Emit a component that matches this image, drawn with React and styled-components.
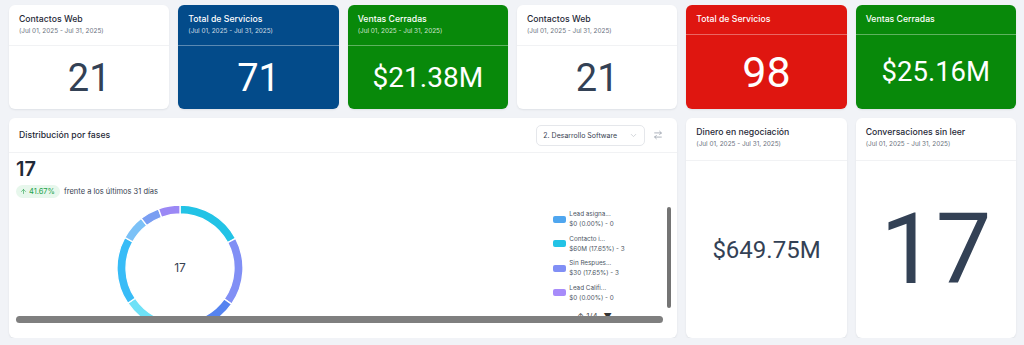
import React from 'react'
import styled, { createGlobalStyle } from 'styled-components'
import { ChevronDown, ArrowRightLeft, ArrowUp } from 'lucide-react'

const GlobalStyle = createGlobalStyle`
  *{ box-sizing: border-box; margin: 0; padding: 0; }
  body{
    background: #f1f3f7;
    font-family: Inter, "Noto Sans", sans-serif;
    color: #1f2937;
  }
`

const tones = {
  white: { bg: '#ffffff', title: '#1f2937', date: '#6b7280', line: '#f1f2f4', value: '#334155' },
  blue: { bg: '#034b8a', title: '#ffffff', date: 'rgba(255,255,255,0.8)', line: 'rgba(255,255,255,0.35)', value: '#ffffff' },
  green: { bg: '#08890a', title: '#ffffff', date: 'rgba(255,255,255,0.8)', line: 'rgba(255,255,255,0.35)', value: '#ffffff' },
  red: { bg: '#df1610', title: '#ffffff', date: 'rgba(255,255,255,0.8)', line: 'rgba(255,255,255,0.35)', value: '#ffffff' },
}

const Page = styled.div`
  display: grid;
  grid-template-columns: repeat(6, 1fr);
  grid-template-rows: 104px 220px;
  gap: 9px;
  padding: 5px 8px 0 9px;
  width: 1024px;
`

const Card = styled.div`
  background: ${p => tones[p.$tone || 'white'].bg};
  border-radius: 6px;
  box-shadow: 0 1px 2px rgba(15, 23, 42, 0.08);
  display: flex;
  flex-direction: column;
  overflow: hidden;
  grid-column: span ${p => p.$span || 1};
`

const Head = styled.div`
  padding: ${p => p.$pad || '8px 10px 9px'};
  border-bottom: 1px solid ${p => tones[p.$tone || 'white'].line};
`

const Title = styled.div`
  font-size: 8.7px;
  line-height: 13px;
  font-weight: 500;
  white-space: nowrap;
  color: ${p => tones[p.$tone || 'white'].title};
`

const DateRange = styled.div`
  font-size: 6.4px;
  line-height: 10px;
  white-space: nowrap;
  color: ${p => tones[p.$tone || 'white'].date};
`

const Value = styled.div`
  flex: 1;
  display: flex;
  align-items: center;
  justify-content: center;
  font-family: Roboto, "Liberation Sans", sans-serif;
  font-size: ${p => p.$size}px;
  line-height: 1;
  color: ${p => tones[p.$tone || 'white'].value};
`

const StatCard = ({ tone, title, dated = true, value, size, pad }) => (
  <Card $tone={tone}>
    <Head $tone={tone} $pad={pad || (dated ? '8px 10px 9px' : '8px 10px 8px')}>
      <Title $tone={tone}>{title}</Title>
      {dated && <DateRange $tone={tone}>(Jul 01, 2025 - Jul 31, 2025)</DateRange>}
    </Head>
    <Value $tone={tone} $size={size}>{value}</Value>
  </Card>
)

/* distribution card */

const BigHead = styled.div`
  height: 35px;
  padding: 0 14px 0 10px;
  display: flex;
  align-items: center;
  justify-content: space-between;
  border-bottom: 1px solid #f1f2f4;
`

const Controls = styled.div`
  display: flex;
  align-items: center;
  gap: 8px;
  color: #9ca3af;
`

const Select = styled.div`
  width: 109px;
  height: 21px;
  border: 1px solid #e5e7eb;
  border-radius: 5px;
  display: flex;
  align-items: center;
  justify-content: space-between;
  padding: 0 6px;
  font-size: 7px;
  white-space: nowrap;
  color: #374151;
  svg{ color: #c4c8cf; }
`

const Body = styled.div`
  padding: 6px 5px 0 7px;
  display: flex;
  flex-direction: column;
`

const Total = styled.div`
  font-size: 20px;
  line-height: 20px;
  font-weight: 600;
  color: #1f2937;
`

const TrendRow = styled.div`
  margin-top: 6px;
  display: flex;
  align-items: center;
  gap: 4px;
  font-size: 7.5px;
  color: #374151;
`

const Badge = styled.span`
  display: inline-flex;
  align-items: center;
  gap: 2px;
  height: 13px;
  padding: 0 5px 0 4px;
  border-radius: 7px;
  background: #e7f7ec;
  color: #22a24a;
`

const ChartArea = styled.div`
  margin-top: 5px;
  height: 113px;
  display: flex;
  overflow: hidden;
`

const Donut = styled.svg`
  margin-left: 99px;
  flex: none;
`

const Legend = styled.div`
  margin-left: auto;
  width: 111px;
  padding-top: 6px;
  display: flex;
  flex-direction: column;
  gap: 4.5px;
`

const LegendItem = styled.div`
  display: flex;
  align-items: center;
  gap: 3px;
  font-size: 6.3px;
  line-height: 10px;
  color: #4b5563;
`

const Swatch = styled.span`
  width: 13px;
  height: 7px;
  border-radius: 2px;
  background: ${p => p.$color};
  flex: none;
`

const Pager = styled.div`
  margin-top: 4px;
  padding-left: 24px;
  font-size: 8px;
  line-height: 10px;
  color: #555;
  b{ color: #333; margin-left: 6px; }
`

const VScroll = styled.div`
  width: 4px;
  margin: 4px 1px 0 3px;
  height: 101px;
  border-radius: 2px;
  background: #747474;
  flex: none;
`

const HScroll = styled.div`
  height: 7px;
  margin-right: 9px;
  border-radius: 4px;
  background: #7f7f7f;
`

const segments = [
  { s: 0, e: 62, c: '#22c3e6' },
  { s: 62, e: 125, c: '#818ff5' },
  { s: 125, e: 188, c: '#5583f0' },
  { s: 188, e: 236, c: '#6ee1f7' },
  { s: 236, e: 299, c: '#38bcf7' },
  { s: 299, e: 322, c: '#7cc1f7' },
  { s: 322, e: 340, c: '#7a9ef2' },
  { s: 340, e: 360, c: '#9b88f5' },
]

const pt = (cx, cy, r, a) => {
  const rad = (a - 90) * Math.PI / 180
  return [cx + r * Math.cos(rad), cy + r * Math.sin(rad)]
}

const arc = (cx, cy, r1, r2, s, e) => {
  const large = e - s > 180 ? 1 : 0
  const [x1, y1] = pt(cx, cy, r2, s)
  const [x2, y2] = pt(cx, cy, r2, e)
  const [x3, y3] = pt(cx, cy, r1, e)
  const [x4, y4] = pt(cx, cy, r1, s)
  return `M${x1} ${y1} A${r2} ${r2} 0 ${large} 1 ${x2} ${y2} L${x3} ${y3} A${r1} ${r1} 0 ${large} 0 ${x4} ${y4} Z`
}

const legend = [
  { c: '#4fa6ef', name: 'Lead asigna...', v: '$0 (0.00%) - 0' },
  { c: '#22c3e6', name: ' Contacto i...', v: '$60M (17.65%) - 3' },
  { c: '#818ff5', name: 'Sin Respues...', v: '$30 (17.65%) - 3' },
  { c: '#a78bfa', name: 'Lead Califi...', v: '$0 (0.00%) - 0' },
]

const DistributionCard = () => (
  <Card $span={4}>
    <BigHead>
      <Title>Distribución por fases</Title>
      <Controls>
        <Select>
          <span>2. Desarrollo Software</span>
          <ChevronDown size={9} />
        </Select>
        <ArrowRightLeft size={10} />
      </Controls>
    </BigHead>
    <Body>
      <Total>17</Total>
      <TrendRow>
        <Badge><ArrowUp size={7} />41.67%</Badge>
        <span>frente a los últimos 31 días</span>
      </TrendRow>
      <ChartArea>
        <Donut width="130" height="130" viewBox="0 0 130 130">
          {segments.map((g, i) => (
            <path key={i} d={arc(65, 65, 54, 63, g.s, g.e)} fill={g.c} stroke="#fff" strokeWidth="1.3" />
          ))}
          <text x="65" y="69" textAnchor="middle" fontSize="12" fill="#374151" fontFamily="Inter, sans-serif">17</text>
        </Donut>
        <Legend>
          {legend.map(l => (
            <LegendItem key={l.name}>
              <Swatch $color={l.c} />
              <div>
                <div>{l.name}</div>
                <div>{l.v}</div>
              </div>
            </LegendItem>
          ))}
          <Pager>↑ 1/4<b>▼</b></Pager>
        </Legend>
        <VScroll />
      </ChartArea>
      <HScroll />
    </Body>
  </Card>
)

const App = () => (
  <>
    <GlobalStyle />
    <Page>
      <StatCard title="Contactos Web" value="21" size={38} />
      <StatCard tone="blue" title="Total de Servicios" value="71" size={38} />
      <StatCard tone="green" title="Ventas Cerradas" value="$21.38M" size={28} />
      <StatCard title="Contactos Web" value="21" size={38} />
      <StatCard tone="red" title="Total de Servicios" dated={false} value="98" size={43} />
      <StatCard tone="green" title="Ventas Cerradas" dated={false} value="$25.16M" size={27.5} />

      <DistributionCard />
      <StatCard title="Dinero en negociación" value="$649.75M" size={24} pad="8px 10px 11px" />
      <StatCard title="Conversaciones sin leer" value="17" size={99} pad="8px 10px 11px" />
    </Page>
  </>
)

export default App
